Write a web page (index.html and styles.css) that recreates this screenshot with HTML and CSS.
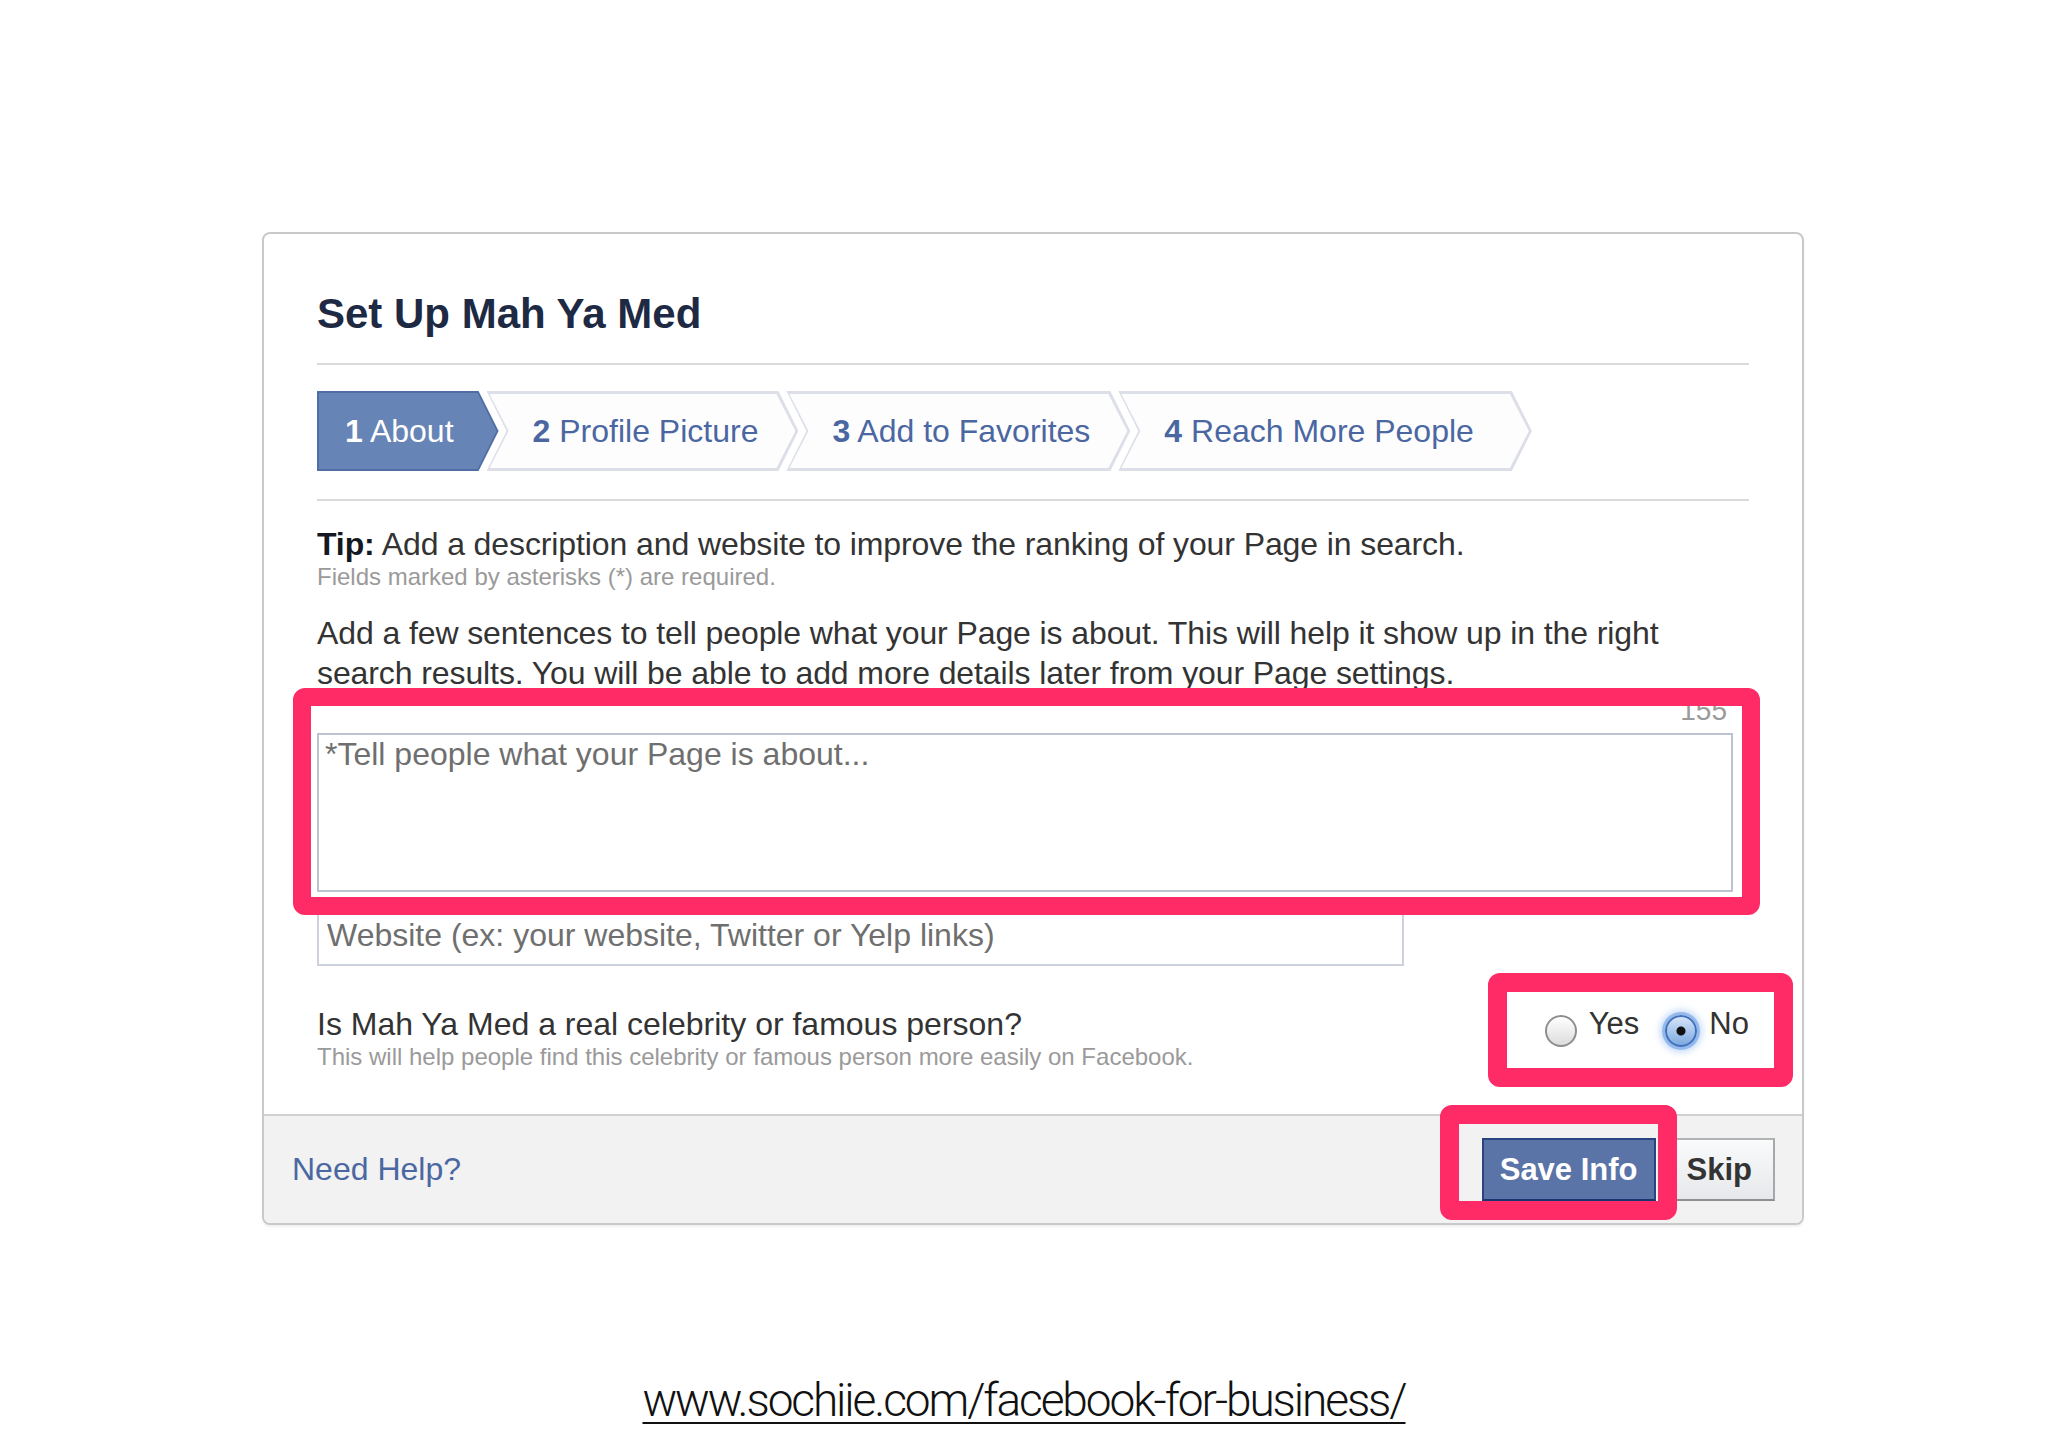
FILE: index.html
```html
<!DOCTYPE html>
<html lang="en">
<head>
<meta charset="utf-8">
<title>Set Up Mah Ya Med</title>
<link rel="stylesheet" href="styles.css">
</head>
<body>
<div class="page">
  <div class="dialog">
    <div class="dialog-body">
      <h1 class="title">Set Up Mah Ya Med</h1>
      <div class="rule rule-top"></div>
      <div class="steps">
        <div class="step step-first"><span class="step-label"><b>1</b> About</span></div>
        <div class="step"><span class="step-label"><b>2</b> Profile Picture</span></div>
        <div class="step"><span class="step-label"><b>3</b> Add to Favorites</span></div>
        <div class="step step-last"><span class="step-label"><b>4</b> Reach More People</span></div>
      </div>
      <div class="rule rule-bottom"></div>
      <p class="tip"><b>Tip:</b> Add a description and website to improve the ranking of your Page in search.</p>
      <p class="hint">Fields marked by asterisks (*) are required.</p>
      <p class="intro">Add a few sentences to tell people what your Page is about. This will help it show up in the right search results. You will be able to add more details later from your Page settings.</p>
      <div class="counter">155</div>
      <textarea class="about-field" placeholder="*Tell people what your Page is about..."></textarea>
      <input class="website-field" type="text" placeholder="Website (ex: your website, Twitter or Yelp links)">
      <div class="question-row">
        <div class="question-text">
          <p class="question">Is Mah Ya Med a real celebrity or famous person?</p>
          <p class="hint">This will help people find this celebrity or famous person more easily on Facebook.</p>
        </div>
        <div class="radios">
          <span class="radio"><span class="radio-dot"></span>Yes</span>
          <span class="radio"><span class="radio-dot radio-checked"></span>No</span>
        </div>
      </div>
    </div>
    <div class="dialog-footer">
      <a class="help-link">Need Help?</a>
      <div class="actions">
        <button class="btn btn-primary">Save Info</button>
        <button class="btn btn-skip">Skip</button>
      </div>
    </div>
    <div class="highlight hl-about"></div>
    <div class="highlight hl-radio"></div>
    <div class="highlight hl-save"></div>
  </div>
  <a class="source-link">www.sochiie.com/facebook-for-business/</a>
</div>
</body>
</html>
```

FILE: styles.css
```css
* { box-sizing: border-box; }

body {
  margin: 0;
  background: #ffffff;
  font-family: "Liberation Sans", Arial, Helvetica, sans-serif;
  color: #333333;
}

.page {
  width: 2048px;
  min-height: 1448px;
  padding-top: 232px;
}

.dialog {
  position: relative;
  width: 1542px;
  margin-left: 262px;
  border: 2px solid #c9c9c9;
  border-radius: 8px;
  background: #ffffff;
  box-shadow: 0 2px 2px rgba(0, 0, 0, 0.06);
}

.dialog-body {
  padding: 56px 53px 43px;
}

.title {
  margin: 0;
  font-size: 42px;
  line-height: 48px;
  font-weight: bold;
  color: #1e2a44;
}

.rule {
  height: 2px;
  background: #dadada;
}
.rule-top { margin-top: 25px; }
.rule-bottom { margin-top: 28px; }

.steps {
  display: flex;
  height: 80px;
  margin-top: 26px;
}

.step {
  position: relative;
  display: flex;
  align-items: center;
  height: 80px;
  margin-left: -12px;
  padding: 0 40px 0 46px;
  background: #dcdfe7;
  clip-path: polygon(0 0, calc(100% - 20px) 0, 100% 50%, calc(100% - 20px) 100%, 0 100%, 20px 50%);
  font-size: 32px;
  color: #4b67a1;
  white-space: nowrap;
}
.step::before {
  content: "";
  position: absolute;
  inset: 3px;
  background: #fdfdfe;
  clip-path: polygon(0 0, calc(100% - 19px) 0, 100% 50%, calc(100% - 19px) 100%, 0 100%, 19px 50%);
}
.step-label { position: relative; }
.step-label b { font-weight: bold; }

.step-first {
  margin-left: 0;
  padding: 0 45px 0 28px;
  background: #4f6ea4;
  color: #ffffff;
  clip-path: polygon(0 0, calc(100% - 20px) 0, 100% 50%, calc(100% - 20px) 100%, 0 100%);
}
.step-first::before {
  inset: 2px;
  background: #6784b6;
  clip-path: polygon(0 0, calc(100% - 19px) 0, 100% 50%, calc(100% - 19px) 100%, 0 100%);
}
.step-last { padding-right: 58px; }

p { margin: 0; }

.tip {
  margin-top: 24px;
  font-size: 32px;
  line-height: 38px;
  letter-spacing: -0.1px;
}
.tip b { color: #141823; }

.hint {
  font-size: 24px;
  line-height: 28px;
  color: #9a9a9a;
}

.intro {
  margin-top: 22px;
  font-size: 32px;
  line-height: 40px;
  letter-spacing: -0.1px;
}

.counter {
  margin-top: 4px;
  margin-right: 22px;
  text-align: right;
  font-size: 28px;
  line-height: 28px;
  color: #9a9a9a;
}

.about-field {
  display: block;
  width: 1416px;
  height: 159px;
  margin: 8px 0 0;
  padding: 0 6px;
  border: 2px solid #bcc3d0;
  border-radius: 0;
  resize: none;
  outline: none;
  font-family: "Liberation Sans", Arial, Helvetica, sans-serif;
  font-size: 32px;
  line-height: 38px;
  color: #333333;
  background: #ffffff;
}

.website-field {
  display: block;
  width: 1087px;
  height: 62px;
  margin: 12px 0 0;
  padding: 0 8px;
  border: 2px solid #ccd1dc;
  border-radius: 0;
  outline: none;
  font-family: "Liberation Sans", Arial, Helvetica, sans-serif;
  font-size: 32px;
  color: #333333;
  background: #ffffff;
}

.about-field::placeholder,
.website-field::placeholder {
  color: #6f6f6f;
  opacity: 1;
}

.question-row {
  display: flex;
  justify-content: space-between;
  align-items: flex-start;
  margin-top: 39px;
}

.question {
  font-size: 32px;
  line-height: 38px;
}

.radios {
  display: flex;
  align-items: center;
  gap: 26px;
  height: 38px;
  font-size: 31px;
  color: #333333;
}

.radio {
  display: flex;
  align-items: center;
}

.radio-dot {
  width: 32px;
  height: 32px;
  margin-right: 12px;
  margin-top: 14px;
  border-radius: 50%;
  border: 2px solid #8e8e8e;
  background: linear-gradient(#ffffff, #dcdcdc);
  box-shadow: inset 0 1px 1px rgba(255, 255, 255, 0.9);
}

.radio-checked {
  border-color: #3f71bd;
  background:
    radial-gradient(circle, #111111 0 4px, transparent 5px),
    linear-gradient(#d4e4f8, #7ea9e0);
  box-shadow: 0 0 0 3px rgba(103, 153, 225, 0.55), 0 0 7px 5px rgba(120, 170, 240, 0.45);
}

.dialog-footer {
  display: flex;
  align-items: center;
  justify-content: space-between;
  height: 109px;
  padding: 0 27px 0 28px;
  border-top: 2px solid #d0d0d0;
  border-radius: 0 0 6px 6px;
  background: #f2f2f2;
}

.help-link {
  font-size: 32px;
  color: #4b67a1;
  text-decoration: none;
}

.actions {
  display: flex;
  align-items: center;
}

.btn {
  height: 63px;
  margin: 0;
  padding: 0 16px;
  border: 2px solid;
  border-radius: 0;
  font-family: "Liberation Sans", Arial, Helvetica, sans-serif;
  font-size: 31px;
  font-weight: bold;
  line-height: 59px;
}

.btn-primary {
  background: #5b74a8;
  border-color: #29447e #29447e #1a356e;
  color: #ffffff;
}

.btn-skip {
  margin-left: 8px;
  padding: 0 21px;
  background: linear-gradient(#f9fafb, #e6e8eb);
  border-color: #b3b3b3 #a8a8a8 #8f8f8f;
  color: #333333;
}

.highlight {
  position: absolute;
  border: 19px solid #ff2b67;
  border-radius: 12px;
  pointer-events: none;
}
.hl-about {
  left: 29px;
  top: 454px;
  width: 1467px;
  height: 227px;
  border-width: 18px;
}
.hl-radio {
  left: 1224px;
  top: 739px;
  width: 305px;
  height: 114px;
}
.hl-save {
  left: 1176px;
  top: 871px;
  width: 237px;
  height: 115px;
}

.source-link {
  display: block;
  margin-top: 149px;
  text-align: center;
  font-family: Roboto, "Liberation Sans", Arial, sans-serif;
  font-weight: 300;
  font-size: 46px;
  line-height: 52px;
  letter-spacing: -2.1px;
  color: #111111;
  text-decoration: underline;
  text-decoration-thickness: 2px;
  text-underline-offset: 6px;
}
```
